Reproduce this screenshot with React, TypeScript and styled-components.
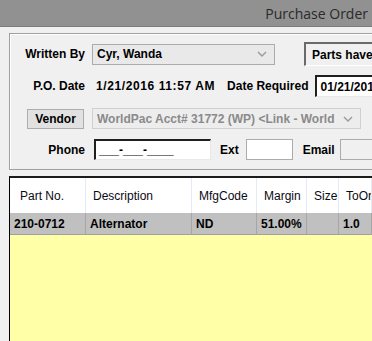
import styled, { createGlobalStyle } from "styled-components";

const Global = createGlobalStyle`
  html, body { margin: 0; padding: 0; }
  body { background: #f0f0f0; font-family: "Liberation Sans", Arial, sans-serif; }
`;

const Window = styled.div`
  width: 372px;
  height: 341px;
  overflow: hidden;
  background: #f0f0f0;
  display: flex;
  flex-direction: column;
`;

const TitleBar = styled.div`
  height: 26px;
  flex: none;
  background: #919191;
  border-bottom: 1px solid #7c7c7c;
  display: flex;
  align-items: center;
  justify-content: flex-end;
  padding-right: 4px;
  font-family: "Open Sans", "Noto Sans", sans-serif;
  font-size: 14px;
  color: #2a2a2a;
`;

const GroupBox = styled.div`
  flex: none;
  margin: 6px 0 0 9px;
  width: 420px;
  height: 137px;
  box-sizing: border-box;
  border: 1px solid #a0a0a0;
  box-shadow: inset 1px 1px 0 #ffffff;
  display: flex;
  flex-direction: column;
`;

const Row = styled.div<{ $top: number; $h: number }>`
  display: flex;
  align-items: center;
  height: ${(p) => p.$h}px;
  margin-top: ${(p) => p.$top}px;
  white-space: nowrap;
`;

const Label = styled.div<{ $w?: number; $pr?: number; $ml?: number }>`
  width: ${(p) => (p.$w ? `${p.$w}px` : "auto")};
  margin-left: ${(p) => p.$ml ?? 0}px;
  padding-right: ${(p) => p.$pr ?? 0}px;
  text-align: right;
  font-size: 12px;
  font-weight: bold;
  color: #000;
  flex: none;
`;

const Text = styled.div<{ $ml: number; $ls?: number }>`
  margin-left: ${(p) => p.$ml}px;
  font-size: 12px;
  font-weight: bold;
  letter-spacing: ${(p) => p.$ls ?? 0}px;
  color: #000;
`;

const Select = styled.div<{ $w: number; $ml: number; $disabled?: boolean }>`
  width: ${(p) => p.$w}px;
  height: 21px;
  margin-left: ${(p) => p.$ml}px;
  box-sizing: border-box;
  border: 1px solid ${(p) => (p.$disabled ? "#d0d0d0" : "#acacac")};
  background: ${(p) => (p.$disabled ? "#ededed" : "#e9e9e9")};
  display: flex;
  align-items: center;
  padding-left: 4px;
  font-size: 12px;
  font-weight: bold;
  color: ${(p) => (p.$disabled ? "#8a8a8a" : "#000")};
  flex: none;
  overflow: hidden;
`;

const SelectText = styled.span`
  flex: 1;
  overflow: hidden;
`;

const Chevron = () => (
  <svg width="14" height="8" viewBox="0 0 14 8" style={{ flex: "none", marginRight: 5 }}>
    <path d="M3 2 L7 6 L11 2" fill="none" stroke="#9a9a9a" strokeWidth="1.4" />
  </svg>
);

const SunkenBox = styled.div<{ $w: number; $ml: number; $h: number }>`
  width: ${(p) => p.$w}px;
  height: ${(p) => p.$h}px;
  margin-left: ${(p) => p.$ml}px;
  box-sizing: border-box;
  border-top: 2px solid #202020;
  border-left: 2px solid #202020;
  border-right: 1px solid #e8e8e8;
  border-bottom: 1px solid #e8e8e8;
  background: #fff;
  display: flex;
  align-items: center;
  padding-left: 3px;
  font-size: 12px;
  font-weight: bold;
  flex: none;
`;

const PartsBox = styled.div`
  width: 90px;
  height: 24px;
  margin-left: 29px;
  box-sizing: border-box;
  border-top: 2px solid #6a6a6a;
  border-left: 2px solid #6a6a6a;
  border-right: 1px solid #fff;
  border-bottom: 1px solid #fff;
  background: #f0f0f0;
  display: flex;
  align-items: center;
  padding-left: 6px;
  font-size: 12px;
  font-weight: bold;
  flex: none;
`;

const Button = styled.div`
  width: 57px;
  height: 20px;
  margin-left: 17px;
  box-sizing: border-box;
  border: 1px solid #adadad;
  background: #e1e1e1;
  display: flex;
  align-items: center;
  justify-content: center;
  font-size: 12px;
  font-weight: bold;
  flex: none;
`;

const Input = styled.div<{ $w: number; $ml: number; $disabled?: boolean }>`
  width: ${(p) => p.$w}px;
  height: 21px;
  margin-left: ${(p) => p.$ml}px;
  box-sizing: border-box;
  border: 1px solid #acacac;
  background: ${(p) => (p.$disabled ? "#f0f0f0" : "#fff")};
  flex: none;
`;

const Grid = styled.div`
  flex: 1;
  margin: 6px 0 0 9px;
  border-top: 2px solid #1c1c1c;
  border-left: 1px solid #000;
  background: #ffffa8;
  display: grid;
  grid-template-columns: 76px 106px 65px 50px 32px 1fr;
  grid-template-rows: 35px 22px;
  align-content: start;
`;

const HeadCell = styled.div<{ $pl: number }>`
  background: #fff;
  border-right: 1px solid #e3ebf6;
  display: flex;
  align-items: center;
  padding-left: ${(p) => p.$pl}px;
  font-family: "Liberation Sans", Arial, sans-serif;
  font-size: 12px;
  color: #0a0a14;
  white-space: nowrap;
  overflow: hidden;
`;

const DataCell = styled.div`
  background: #c0c0c0;
  border-right: 1px solid #a6a6a6;
  border-bottom: 1px solid #a0a0a0;
  display: flex;
  align-items: center;
  padding-left: 4px;
  font-size: 12px;
  font-weight: bold;
  color: #000;
  white-space: nowrap;
  overflow: hidden;
`;

const headers = ["Part No.", "Description", "MfgCode", "Margin", "Size", "ToOrder"];
const row = ["210-0712", "Alternator", "ND", "51.00%", "", "1.0"];

export default function App() {
  return (
    <>
      <Global />
      <Window>
        <TitleBar>Purchase Order</TitleBar>
        <GroupBox>
          <Row $top={8} $h={24}>
            <Label $w={75}>Written By</Label>
            <Select $w={183} $ml={7}>
              <SelectText>Cyr, Wanda</SelectText>
              <Chevron />
            </Select>
            <PartsBox>Parts have</PartsBox>
          </Row>
          <Row $top={9} $h={22}>
            <Label $w={75} $pr={3}>P.O. Date</Label>
            <Text $ml={8} $ls={0.6}>1/21/2016 11:57 AM</Text>
            <Text $ml={12}>Date Required</Text>
            <SunkenBox $w={70} $h={22} $ml={7}>01/21/2016</SunkenBox>
          </Row>
          <Row $top={11} $h={21}>
            <Button>Vendor</Button>
            <Select $w={269} $ml={8} $disabled>
              <SelectText>WorldPac Acct# 31772 (WP) &lt;Link - World</SelectText>
              <Chevron />
            </Select>
          </Row>
          <Row $top={10} $h={21}>
            <Label $w={75} $pr={1}>Phone</Label>
            <SunkenBox $w={117} $h={21} $ml={8}>___-___-____</SunkenBox>
            <Text $ml={9}>Ext</Text>
            <Input $w={47} $ml={7} />
            <Text $ml={10}>Email</Text>
            <Input $w={60} $ml={5} $disabled />
          </Row>
        </GroupBox>
        <Grid>
          {headers.map((h, i) => (
            <HeadCell key={h} $pl={i === 0 ? 10 : 7}>{h}</HeadCell>
          ))}
          {row.map((c, i) => (
            <DataCell key={i}>{c}</DataCell>
          ))}
        </Grid>
      </Window>
    </>
  );
}
